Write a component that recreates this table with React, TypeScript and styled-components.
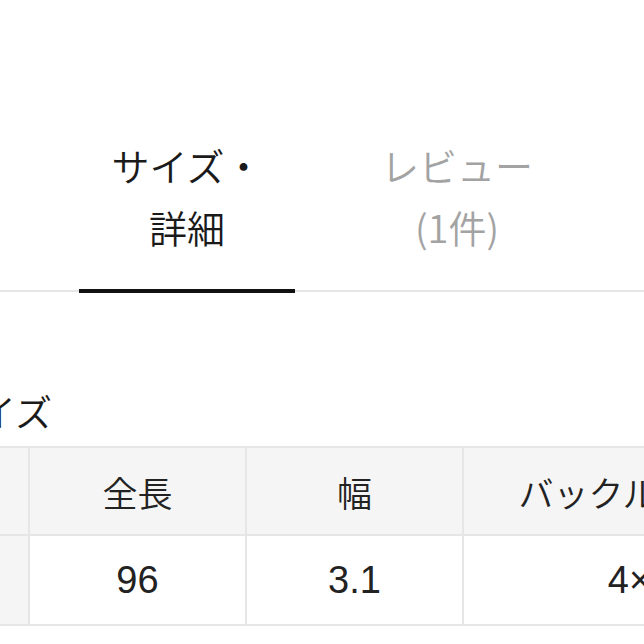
import React from "react";
import styled, { createGlobalStyle } from "styled-components";

const GlobalStyle = createGlobalStyle`
  html, body {
    margin: 0;
    padding: 0;
    background: #ffffff;
    overflow: hidden;
  }
  body {
    font-family: "Liberation Sans", "Noto Sans CJK JP", sans-serif;
    color: #1c1c1c;
  }
`;

const Page = styled.div`
  width: 644px;
  height: 644px;
  overflow: hidden;
  padding-top: 134px;
  box-sizing: border-box;
`;

const TabBar = styled.div`
  display: flex;
  gap: 54px;
  padding-left: 79px;
  border-bottom: 2px solid #e6e6e6;
`;

const Tab = styled.div<{ $active?: boolean }>`
  width: 216px;
  display: flex;
  flex-direction: column;
  align-items: center;
  font-family: "Noto Sans CJK JP", sans-serif;
  font-weight: 350;
  font-size: 38px;
  line-height: 62px;
  color: ${(p) => (p.$active ? "#1a1a1a" : "#a3a3a3")};
  padding-bottom: 31px;
  border-bottom: 4px solid ${(p) => (p.$active ? "#111111" : "transparent")};
  margin-bottom: -3px;
`;

const TabLine = styled.span`
  display: block;
  white-space: nowrap;
`;

const Section = styled.section`
  margin-left: -58px;
  width: 900px;
  padding-top: 101px;
`;

const Heading = styled.h2`
  margin: 0 0 17px;
  font-family: "Noto Sans CJK JP", sans-serif;
  font-weight: 350;
  font-size: 37px;
  line-height: 36px;
  color: #1a1a1a;
`;

const SizeTable = styled.table`
  border-collapse: collapse;
  table-layout: fixed;
  width: 874px;
`;

const Cell = styled.td<{ $head?: boolean; $shade?: boolean; $num?: boolean }>`
  border: 2px solid #e6e6e6;
  text-align: center;
  vertical-align: middle;
  padding: 0;
  height: ${(p) => (p.$head ? "86px" : "88px")};
  background: ${(p) => (p.$head || p.$shade ? "#f5f5f5" : "#ffffff")};
  font-family: ${(p) =>
    p.$num ? `"Liberation Sans", "Noto Sans CJK JP", sans-serif` : `"Noto Sans CJK JP", sans-serif`};
  font-size: ${(p) => (p.$num ? "38px" : "35px")};
  font-weight: ${(p) => (p.$num ? 400 : 350)};
  color: #222222;
  white-space: nowrap;
  overflow: hidden;
`;

const columns = [86, 217, 217, 354];
const headers = ["", "全長", "幅", "バックルサイズ"];
const values = ["", "96", "3.1", "4×4"];

export default function App() {
  return (
    <>
      <GlobalStyle />
      <Page>
        <TabBar>
          <Tab $active>
            <TabLine>サイズ・</TabLine>
            <TabLine>詳細</TabLine>
          </Tab>
          <Tab>
            <TabLine>レビュー</TabLine>
            <TabLine>(1件)</TabLine>
          </Tab>
        </TabBar>
        <Section>
          <Heading>サイズ</Heading>
          <SizeTable>
            <colgroup>
              {columns.map((w, i) => (
                <col key={i} style={{ width: w }} />
              ))}
            </colgroup>
            <tbody>
              <tr>
                {headers.map((h, i) => (
                  <Cell as="th" key={i} $head>
                    {h}
                  </Cell>
                ))}
              </tr>
              <tr>
                {values.map((v, i) => (
                  <Cell key={i} $shade={i === 0} $num>
                    {v}
                  </Cell>
                ))}
              </tr>
            </tbody>
          </SizeTable>
        </Section>
      </Page>
    </>
  );
}
